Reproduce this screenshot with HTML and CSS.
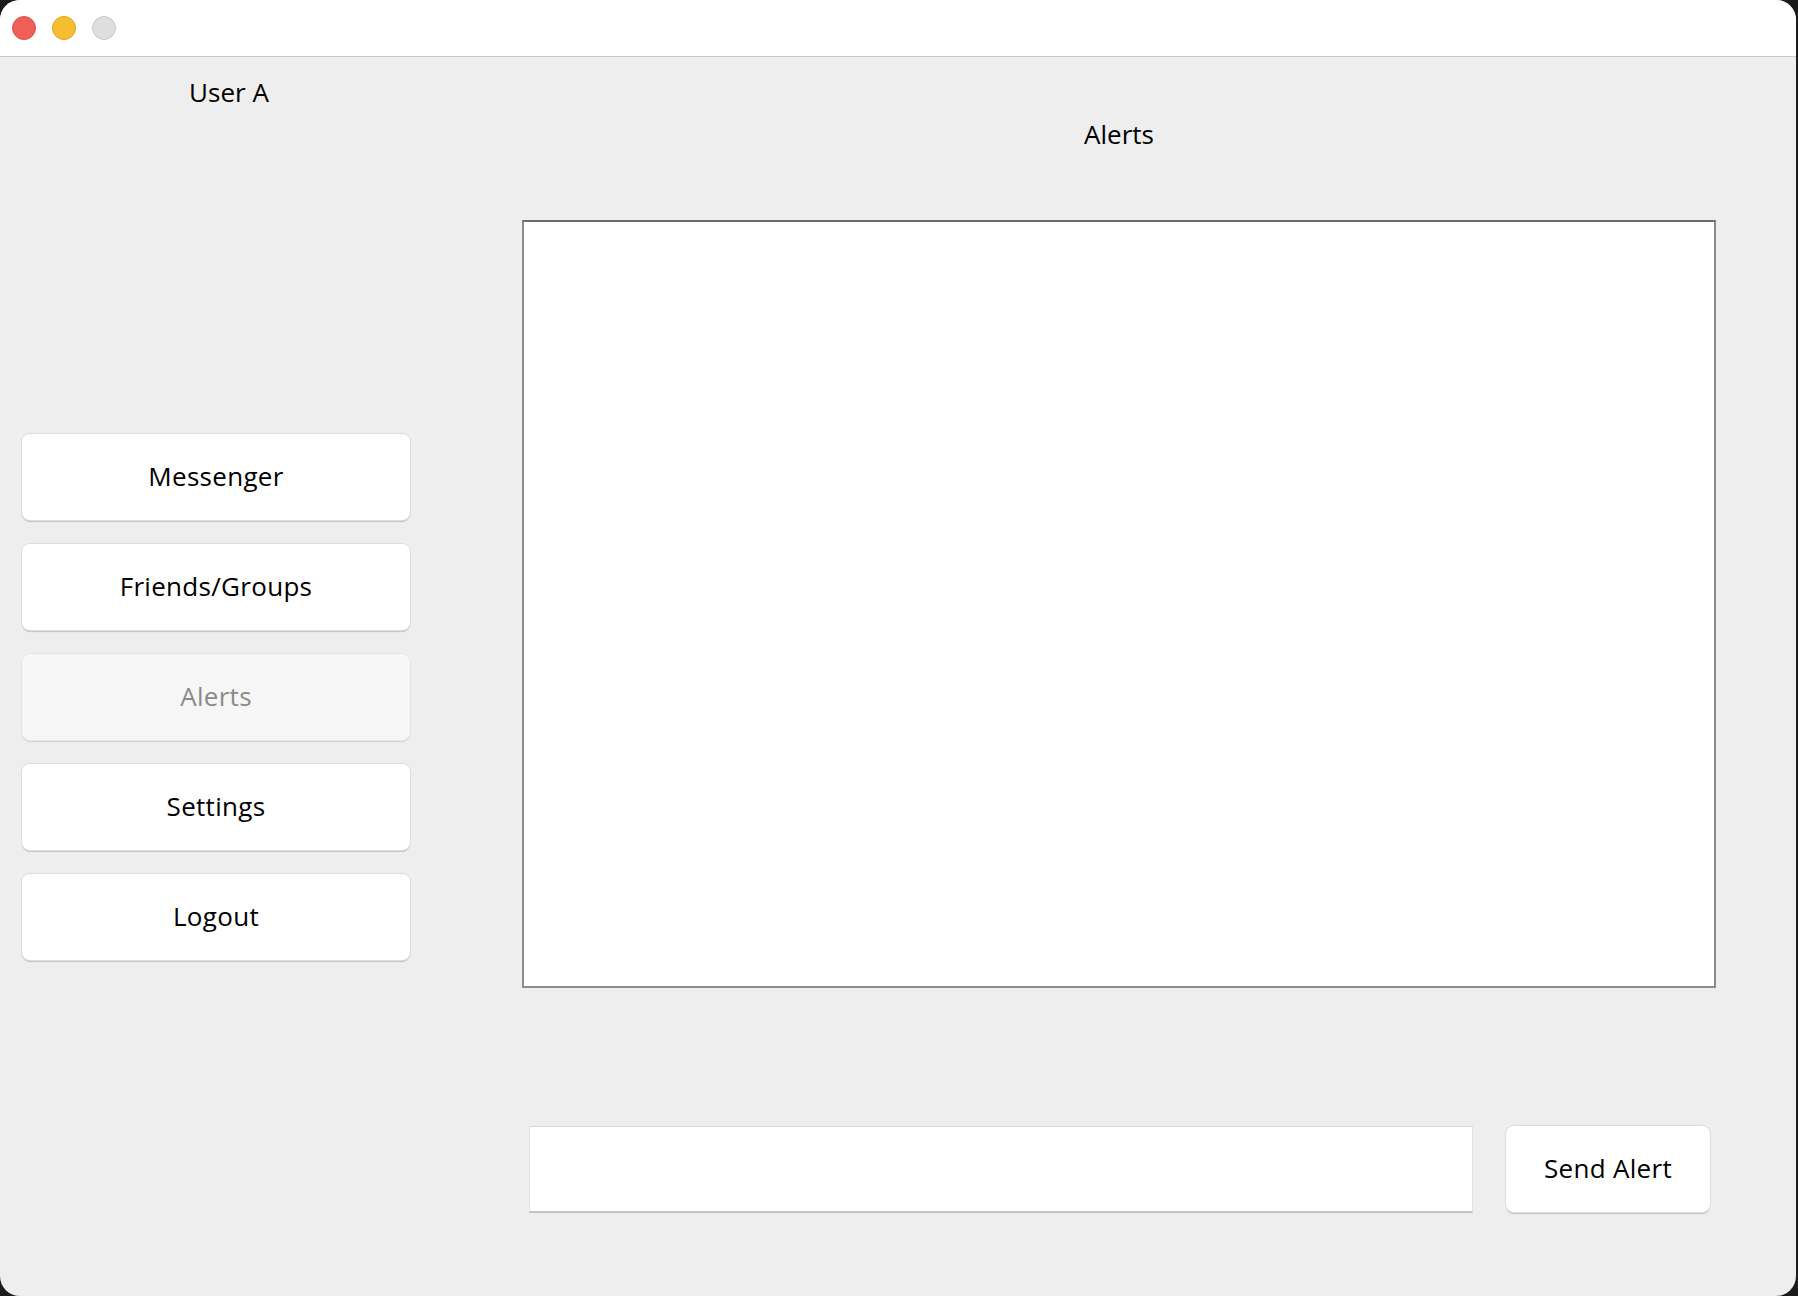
FILE: index.html
```html
<!DOCTYPE html>
<html>
  <head>
    <title>Alerts</title>
    <link rel="stylesheet" href="styles.css">
  </head>
  <body>
    <div class="window">
      <div class="titlebar">
        <span class="light red"></span>
        <span class="light yellow"></span>
        <span class="light gray"></span>
      </div>
      <div class="content">
        <div class="sidebar">
          <div class="user">User A</div>
          <div class="menu">
            <button class="menu-btn">Messenger</button>
            <button class="menu-btn">Friends/Groups</button>
            <button class="menu-btn" disabled>Alerts</button>
            <button class="menu-btn">Settings</button>
            <button class="menu-btn">Logout</button>
          </div>
        </div>
        <div class="main">
          <h2 class="title">Alerts</h2>
          <textarea class="alerts-box"></textarea>
          <div class="send-row">
            <input class="alert-input" type="text">
            <button class="send-btn">Send Alert</button>
          </div>
        </div>
      </div>
    </div>
  </body>
</html>
```

FILE: styles.css
```css
* {
  margin: 0;
  padding: 0;
  box-sizing: border-box;
}

body {
  width: 1798px;
  height: 1296px;
  background-color: #1c1c1c;
  font-family: "Open Sans", "DejaVu Sans", sans-serif;
  font-size: 26px;
  color: #000;
  overflow: hidden;
}

.window {
  width: 1796px;
  height: 1296px;
  background-color: #eeeeee;
  border-radius: 20px;
  overflow: hidden;
  display: flex;
  flex-direction: column;
}

.titlebar {
  height: 57px;
  background-color: #fff;
  border-bottom: 1px solid #c8c8c8;
  display: flex;
  align-items: center;
  gap: 16px;
  padding-left: 12px;
}
.light {
  width: 24px;
  height: 24px;
  border-radius: 50%;
  border: 1px solid;
}
.red {
  background-color: #ee5f57;
  border-color: #d9514a;
}
.yellow {
  background-color: #f5bd2f;
  border-color: #dea224;
}
.gray {
  background-color: #dedede;
  border-color: #c9c9c9;
}

.content {
  flex: 1;
  display: flex;
  gap: 112px;
  padding-left: 22px;
}

.sidebar {
  width: 388px;
  display: flex;
  flex-direction: column;
}
.user {
  margin-top: 17px;
  line-height: 36px;
  text-align: center;
  padding-left: 26px;
}
.menu {
  margin-top: 324px;
  display: flex;
  flex-direction: column;
  gap: 24px;
}
.menu-btn,
.send-btn {
  height: 86px;
  padding-bottom: 2px;
  background-color: #fff;
  border: none;
  border-radius: 8px;
  box-shadow: 0 0 0 1px #dcdcdc, 0 1.5px 1px 0 #c2c2c2;
  font-family: inherit;
  font-size: 26px;
  color: #000;
  letter-spacing: 0.3px;
}
.menu-btn:disabled {
  background-color: #f6f6f6;
  color: #8a8a8a;
  box-shadow: 0 0 0 1px #e4e4e4, 0 1.5px 1px 0 #d4d4d4;
}

.main {
  width: 1194px;
  display: flex;
  flex-direction: column;
}
.title {
  margin-top: 59px;
  line-height: 36px;
  font-size: 26px;
  font-weight: normal;
  text-align: center;
}
.alerts-box {
  margin-top: 68px;
  height: 768px;
  background-color: #fff;
  border: 2px solid #8c8c8c;
  border-top-color: #6b6b6b;
  resize: none;
  outline: none;
}
.send-row {
  margin-top: 138px;
  display: flex;
  gap: 33px;
  padding: 0 6px 0 7px;
}
.alert-input {
  flex: 1;
  height: 87px;
  background-color: #fff;
  border: 1px solid #e4e4e4;
  border-top-color: #d6d6d6;
  border-bottom: 2px solid #c4c4c4;
  outline: none;
}
.send-btn {
  width: 204px;
  height: 86px;
}
```
